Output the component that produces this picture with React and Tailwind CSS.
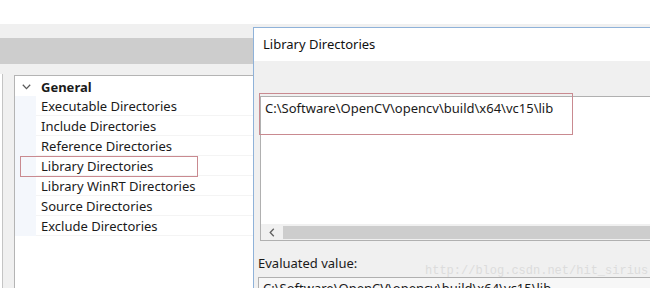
import React from "react";

const rows = [
  "Executable Directories",
  "Include Directories",
  "Reference Directories",
  "Library Directories",
  "Library WinRT Directories",
  "Source Directories",
  "Exclude Directories",
];

export default function App() {
  return (
    <div className="relative w-[650px] h-[288px] overflow-hidden bg-[#f0f0f0] font-['Noto_Sans',sans-serif] text-[13px] text-[#1a1a1a]">
      <div className="h-[24px] bg-white" />
      <div className="h-[14px] bg-[#f0f0f0]" />
      <div className="h-[26px] bg-[#cdcdcd]" />
      <div className="flex">
        <div className="mt-[10px] h-[220px] w-[3px] border-r border-[#c4c4c4] bg-white" />
        <div className="relative ml-[11px] mt-[11px] h-[230px] w-[260px] border border-[#b4b4b4] bg-white">
          <div className="flex h-[20px] items-center pt-[1px]">
            <div className="flex w-[22px] justify-center">
              <svg width="9" height="6" viewBox="0 0 9 6">
                <polyline points="0.8,0.8 4.5,4.6 8.2,0.8" fill="none" stroke="#5a5a5a" strokeWidth="1.3" />
              </svg>
            </div>
            <span className="pl-[4px] font-bold leading-[20px]">General</span>
          </div>
          {rows.map((r) => (
            <div key={r} className="flex h-[20px]">
              <div className="w-[21px] bg-[#f4f7fc]" />
              <div className="flex-1 border-b border-[#f4f4f4] pl-[5px] leading-[20px]">{r}</div>
            </div>
          ))}
          <div className="pointer-events-none absolute left-[5px] top-[80px] h-[21px] w-[178px] border border-[#c98a90]" />
        </div>
      </div>

      <div className="absolute left-[253px] top-[27px] right-[-20px] bottom-0 flex flex-col border-l border-t border-[#8fb2d9] bg-[#f0f0f0]">
        <div className="h-[33px] bg-white pl-[9px] leading-[33px] text-[#111]">Library Directories</div>
        <div className="pt-[35px] pl-[6px]">
          <div className="relative flex h-[145px] flex-col border border-[#b0b0b0] bg-white">
            <div className="flex-1 pl-[4px] pt-[2px] leading-[19px]">C:\Software\OpenCV\opencv\build\x64\vc15\lib</div>
            <div className="flex h-[16px] items-center bg-[#f0f0f0]">
              <div className="flex w-[22px] justify-center">
                <svg width="6" height="9" viewBox="0 0 6 9">
                  <polyline points="4.8,0.8 1.2,4.5 4.8,8.2" fill="none" stroke="#606060" strokeWidth="1.3" />
                </svg>
              </div>
              <div className="h-[13px] flex-1 bg-[#cdcdcd]" />
            </div>
            <div className="pointer-events-none absolute left-[-2px] top-[-4px] h-[42px] w-[314px] border border-[#c98a90]" />
          </div>
        </div>
        <div className="mt-[14px] pl-[4px] leading-[16px]">Evaluated value:</div>
        <div className="ml-[4px] mt-[6px] h-[30px] border border-[#b0b0b0] bg-[#f7f7f7] pl-[4px] leading-[20px]">C:\Software\OpenCV\opencv\build\x64\vc15\lib</div>
      </div>

      <div className="pointer-events-none absolute left-[425px] top-[264px] font-['Liberation_Mono',monospace] text-[12px] leading-[14px] text-[#dcdcdc]">
        http://blog.csdn.net/hit_sirius
      </div>
    </div>
  );
}
